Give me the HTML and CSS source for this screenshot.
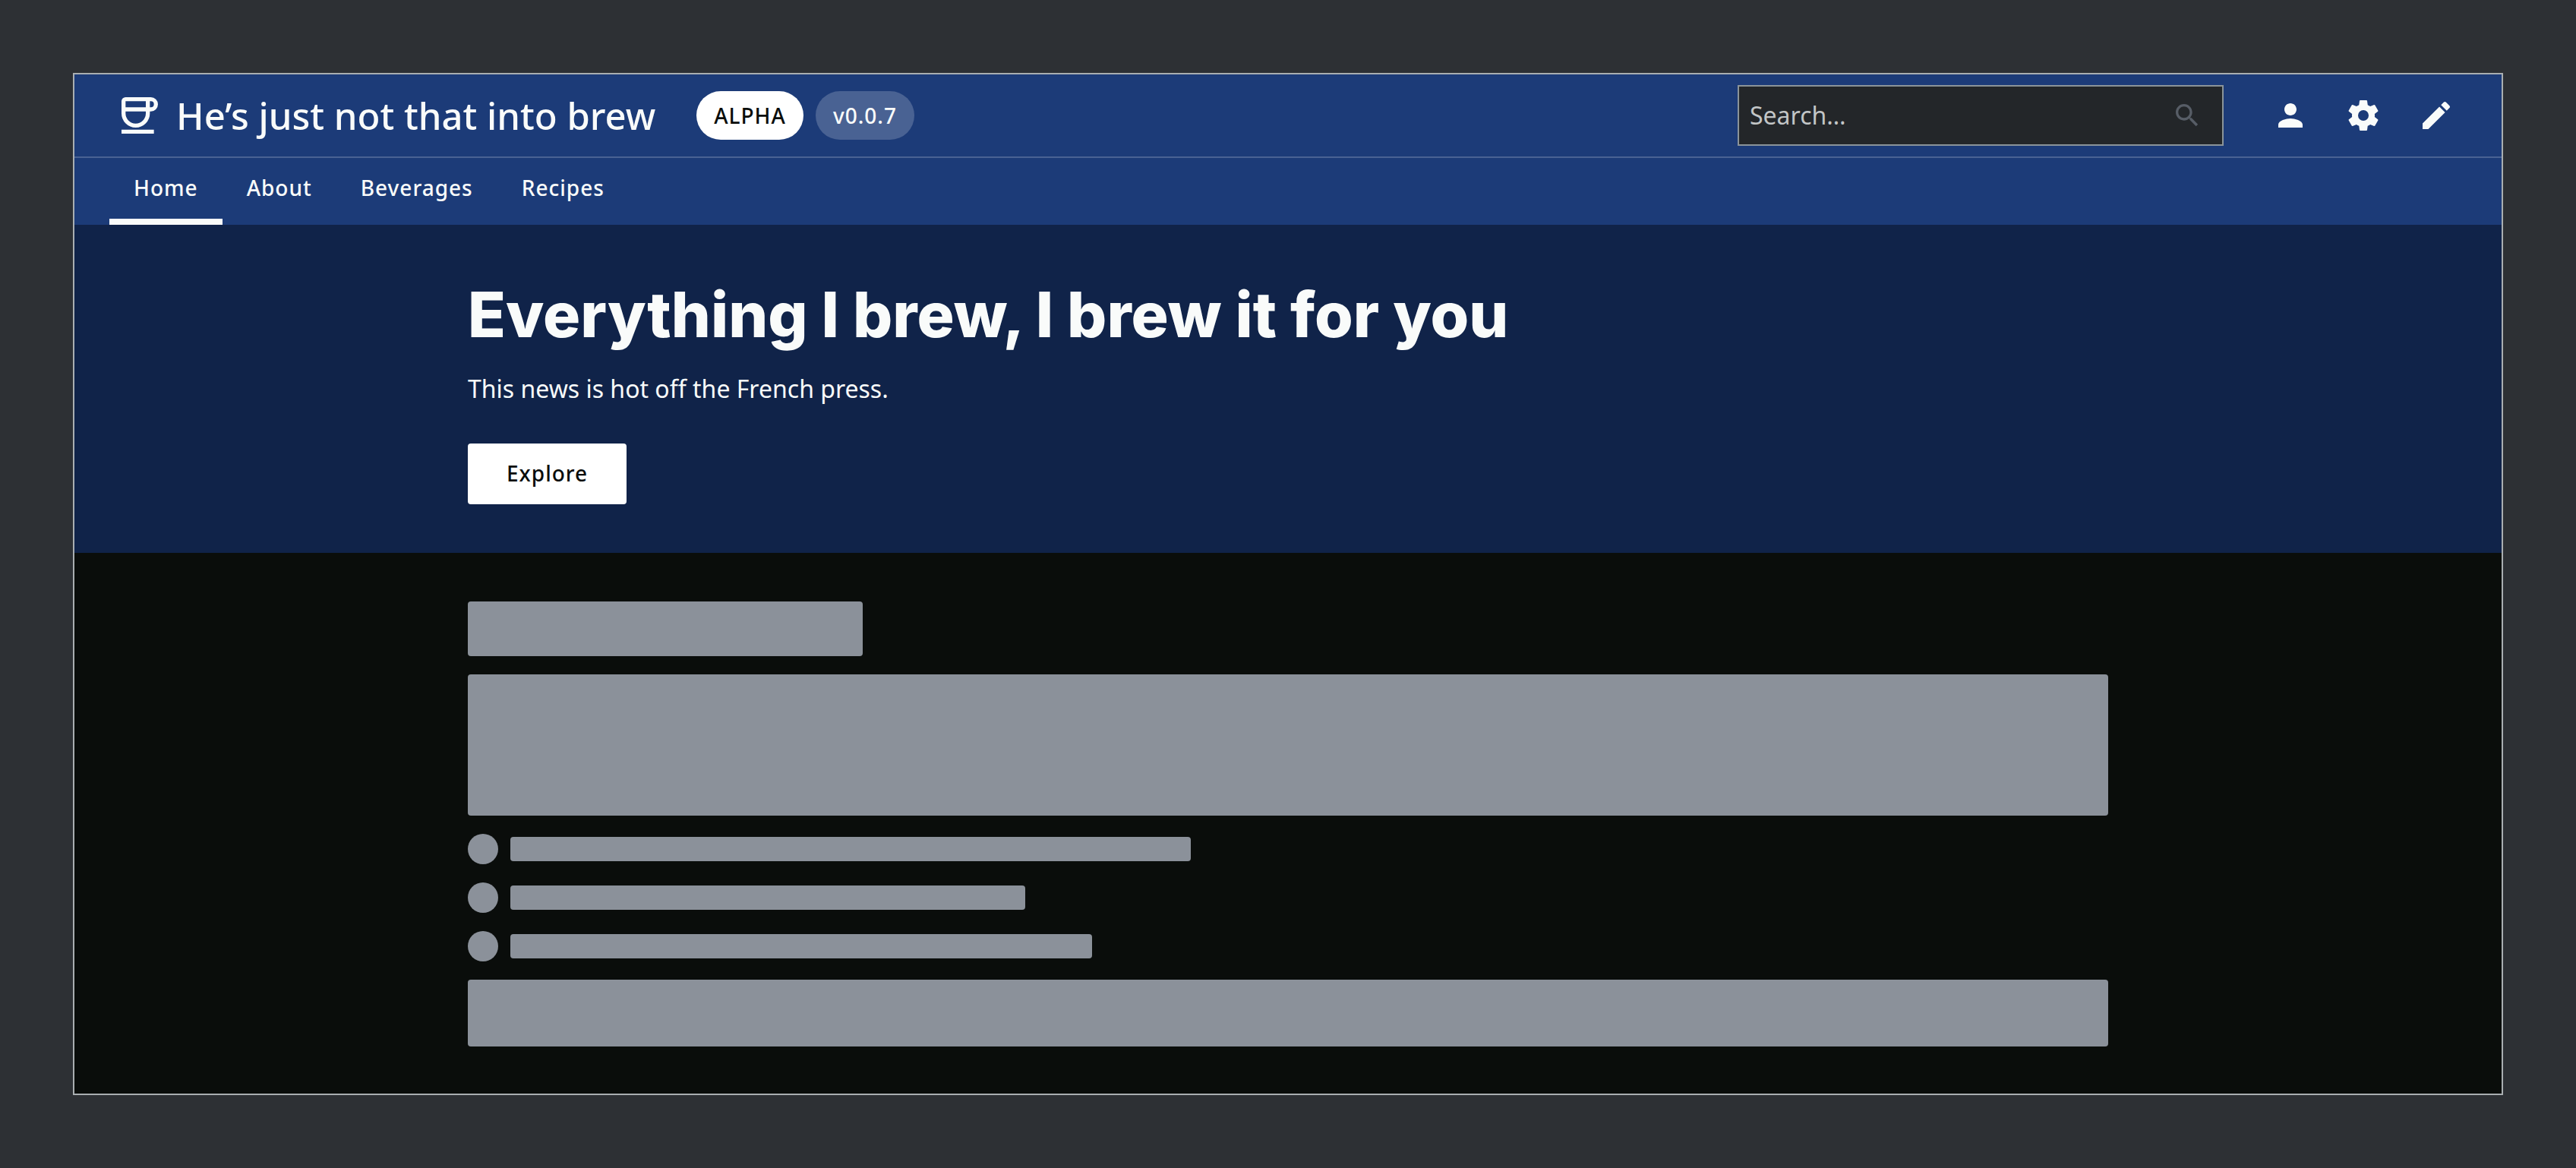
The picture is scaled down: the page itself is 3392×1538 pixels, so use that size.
FILE: index.html
```html
<!DOCTYPE html>
<html lang="en">
<head>
  <meta charset="utf-8">
  <meta name="viewport" content="width=device-width, initial-scale=1">
  <title>He’s just not that into brew</title>
  <link rel="stylesheet" href="styles.css">
</head>
<body>
  <div class="app">
    <header class="header">
      <div class="topbar">
        <a class="brand" href="#">
          <svg class="brand-icon" viewBox="0 0 18 18" aria-hidden="true">
            <g fill="none" stroke="currentColor" stroke-width="2">
              <path d="M13 1H2a1 1 0 0 0-1 1v6a6 6 0 0 0 12 0V1z"/>
              <path d="M1 6h12"/>
              <path d="M13 1h1.500a2.500 2.500 0 0 1 0 5H13"/>
              <path d="M0 17h16"/>
            </g>
          </svg>
          <span class="brand-name">He’s just not that into brew</span>
        </a>
        <div class="badges">
          <span class="badge badge-solid">ALPHA</span>
          <span class="badge badge-muted">v0.0.7</span>
        </div>
        <div class="search">
          <input class="search-input" type="search" placeholder="Search…" aria-label="Search">
          <svg class="search-icon" viewBox="0 0 24 24" aria-hidden="true"><path d="M15.500 14h-.79l-.28-.27C15.410 12.590 16 11.110 16 9.500 16 5.910 13.090 3 9.500 3S3 5.910 3 9.500 5.910 16 9.500 16c1.610 0 3.090-.59 4.230-1.570l.27.28v.79l5 4.990L20.490 19l-4.990-5zm-6 0C7.010 14 5 11.990 5 9.500S7.010 5 9.500 5 14 7.010 14 9.500 11.990 14 9.500 14z"/></svg>
        </div>
        <div class="actions">
          <button class="icon-button" type="button" aria-label="Account">
            <svg viewBox="0 0 24 24"><path d="M12 12c2.210 0 4-1.790 4-4s-1.790-4-4-4-4 1.790-4 4 1.790 4 4 4zm0 2c-2.670 0-8 1.340-8 4v2h16v-2c0-2.660-5.330-4-8-4z"/></svg>
          </button>
          <button class="icon-button" type="button" aria-label="Settings">
            <svg viewBox="0 0 24 24"><path d="M12 15.500A3.500 3.500 0 0 1 8.500 12 3.500 3.500 0 0 1 12 8.500a3.500 3.500 0 0 1 3.500 3.500 3.500 3.500 0 0 1-3.500 3.500m7.430-2.530c.04-.32.07-.64.07-.97 0-.33-.03-.66-.07-1l2.110-1.630c.19-.15.24-.42.12-.64l-2-3.460c-.12-.22-.39-.31-.61-.22l-2.490 1c-.52-.39-1.060-.73-1.690-.98l-.37-2.650A.506.506 0 0 0 14 2h-4c-.25 0-.46.18-.5.42l-.37 2.650c-.63.25-1.170.59-1.690.98l-2.490-1c-.22-.09-.49 0-.61.22l-2 3.460c-.13.22-.07.49.12.64L4.570 11c-.04.34-.07.67-.07 1 0 .33.03.65.07.97l-2.110 1.660c-.19.15-.25.42-.12.64l2 3.460c.12.22.39.3.61.22l2.490-1.010c.52.4 1.060.74 1.690.99l.37 2.650c.04.24.25.42.5.42h4c.25 0 .46-.18.5-.42l.37-2.650c.63-.26 1.170-.59 1.690-.99l2.490 1.010c.22.08.49 0 .61-.22l2-3.460c.12-.22.07-.49-.12-.64l-2.110-1.660z"/></svg>
          </button>
          <button class="icon-button" type="button" aria-label="Edit">
            <svg viewBox="0 0 24 24"><path d="M3 17.250V21h3.750L17.810 9.940l-3.750-3.750L3 17.250zM20.710 7.040c.39-.39.39-1.020 0-1.410l-2.340-2.340c-.39-.39-1.020-.39-1.410 0l-1.830 1.830 3.750 3.750 1.830-1.830z"/></svg>
          </button>
        </div>
      </div>
      <nav class="tabs" aria-label="Main">
        <a class="tab tab-active" href="#" aria-current="page">Home</a>
        <a class="tab" href="#">About</a>
        <a class="tab" href="#">Beverages</a>
        <a class="tab" href="#">Recipes</a>
      </nav>
    </header>
    <section class="hero">
      <div class="container">
        <h1 class="hero-title">Everything I brew, I brew it for you</h1>
        <p class="hero-text">This news is hot off the French press.</p>
        <button class="hero-button" type="button">Explore</button>
      </div>
    </section>
    <main class="content">
      <div class="container skeletons">
        <div class="skeleton skeleton-heading"></div>
        <div class="skeleton skeleton-large"></div>
        <div class="skeleton-row"><div class="skeleton-dot"></div><div class="skeleton skeleton-line" style="width: 896px"></div></div>
        <div class="skeleton-row"><div class="skeleton-dot"></div><div class="skeleton skeleton-line" style="width: 678px"></div></div>
        <div class="skeleton-row"><div class="skeleton-dot"></div><div class="skeleton skeleton-line" style="width: 766px"></div></div>
        <div class="skeleton skeleton-medium"></div>
      </div>
    </main>
  </div>
</body>
</html>
```
FILE: styles.css
```css
*,
*::before,
*::after {
  box-sizing: border-box;
}

body {
  margin: 0;
  padding: 96px;
  background: #2d3034;
  color: #f9fbfa;
  font-family: "Noto Sans", "Open Sans", sans-serif;
  font-size: 32px;
  line-height: 48px;
}

.app {
  border: 2px solid #a9aeb1;
  background: #0a0d0b;
}

.header {
  background: #1c3b78;
}

.topbar {
  display: flex;
  align-items: center;
  padding: 14px 62px;
  border-bottom: 2px solid #496293;
}

.brand {
  display: flex;
  align-items: center;
  gap: 24px;
  color: inherit;
  text-decoration: none;
}

.brand-icon {
  width: 48px;
  height: 48px;
}

.brand-name {
  font-size: 49px;
  font-weight: 500;
  line-height: 64px;
}

.badges {
  display: flex;
  gap: 16px;
  margin-left: 54px;
}

.badge {
  padding: 0 23px;
  border-radius: 32px;
  font-size: 28px;
  font-weight: 500;
  letter-spacing: 1px;
  line-height: 64px;
}

.badge-solid {
  background: #fff;
  color: #0a0d0b;
}

.badge-muted {
  background: #496293;
}

.search {
  display: flex;
  align-items: center;
  width: 640px;
  height: 80px;
  margin-left: auto;
  padding: 0 26px 0 14px;
  border: 2px solid #8b9499;
  background: #232629;
}

.search-input {
  flex: 1;
  min-width: 0;
  padding: 0;
  border: 0;
  outline: 0;
  background: none;
  color: inherit;
  font: inherit;
}

.search-input::placeholder {
  color: #c2c5c6;
  opacity: 1;
}

.search-icon {
  width: 40px;
  height: 40px;
  fill: #575d66;
}

.actions {
  display: flex;
  gap: 48px;
  margin-left: 64px;
}

.icon-button {
  width: 48px;
  height: 48px;
  padding: 0;
  border: 0;
  background: none;
  color: inherit;
}

.icon-button svg {
  display: block;
  fill: currentColor;
}

.tabs {
  display: flex;
  padding: 0 46px;
}

.tab {
  padding: 15px 32px 17px;
  border-bottom: 8px solid transparent;
  color: inherit;
  font-size: 28px;
  font-weight: 500;
  letter-spacing: 1px;
  line-height: 48px;
  text-decoration: none;
}

.tab-active {
  border-bottom-color: #f9fbfa;
}

.hero {
  padding: 64px;
  background: #102349;
}

.container {
  max-width: 2160px;
  margin: 0 auto;
}

.hero-title {
  margin: 0;
  font-family: Inter, "Noto Sans", sans-serif;
  font-size: 82px;
  font-weight: 800;
  line-height: 110px;
}

.hero-text {
  margin: 18px 0 48px;
}

.hero-button {
  display: block;
  height: 80px;
  padding: 0 51px 2px;
  border: 0;
  border-radius: 4px;
  background: #fff;
  color: #0a0d0b;
  font: inherit;
  font-size: 28px;
  font-weight: 500;
  letter-spacing: 1px;
}

.content {
  padding: 64px 64px 62px;
}

.skeletons {
  display: flex;
  flex-direction: column;
  gap: 24px;
}

.skeleton,
.skeleton-dot {
  background: #8b919a;
}

.skeleton {
  border-radius: 4px;
}

.skeleton-heading {
  width: 520px;
  height: 72px;
}

.skeleton-large {
  height: 186px;
}

.skeleton-medium {
  height: 88px;
}

.skeleton-row {
  display: flex;
  align-items: center;
  gap: 16px;
}

.skeleton-dot {
  width: 40px;
  height: 40px;
  border-radius: 50%;
}

.skeleton-line {
  height: 32px;
}
```
